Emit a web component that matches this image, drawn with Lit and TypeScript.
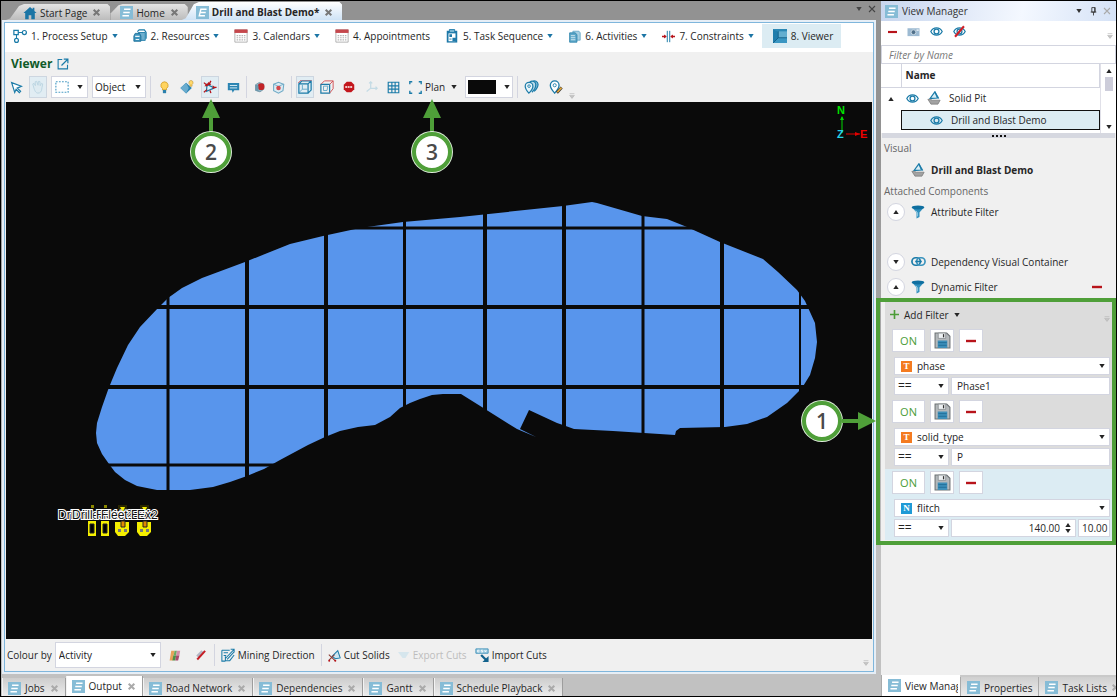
import { LitElement, html, svg, css } from "lit";
import { customElement } from "lit/decorators.js";
import { classMap } from "lit/directives/class-map.js";

const icon = (body: unknown, w = 14, h = 14, box = "0 0 16 16") =>
  html`<svg class="icon" width=${w} height=${h} viewBox=${box} fill="none" aria-hidden="true">${body}</svg>`;

const B = "#1b7ba8";
const R = "#b8141b";

const docBody = svg`<rect width="16" height="16" fill="#86bcd6"/><path d="M5 4h8M4 8h8M3 12h8" stroke="#fff" stroke-width="1.6"/>`;
const doc = () => icon(docBody, 13, 13);
const docE = () => icon(svg`<rect width="16" height="16" fill="#86bcd6"/><path d="M13 4H6L4 12h7M5 8h7" stroke="#fff" stroke-width="1.7"/>`, 13, 13);
const cross = () => icon(svg`<path d="M3 3l10 10M13 3L3 13" stroke="currentColor" stroke-width="3.6"/>`, 9, 9);
const caret = () => icon(svg`<path d="M0 0h8L4 6z" fill="currentColor"/>`, 6, 4, "0 0 8 6");
const caretUp = () => icon(svg`<path d="M0 6h8L4 0z" fill="currentColor"/>`, 6, 4, "0 0 8 6");
const overflow = () => icon(svg`<path d="M1 1h8M1 4h8L5 9z" stroke="#b5b5b5" fill="#c4c4c4"/>`, 6, 6, "0 0 10 10");
const eye = (w = 13) => icon(svg`<path d="M1 8c3-6 11-6 14 0c-3 6-11 6-14 0z" stroke="${B}" stroke-width="1.5"/><circle cx="8" cy="8" r="3" stroke="${B}" stroke-width="1.6"/>`, w, w);
const minus = (w = 10) => icon(svg`<path d="M0 2h10" stroke="${R}" stroke-width="2.4"/>`, w, 4, "0 0 10 4");
const boat = () => icon(svg`<path d="M9 1L3.500 8.500l8.500-.5z" fill="#d9eef6" stroke="${B}" stroke-width="1.400"/><path d="M9 1l4.500 7.500" stroke="${B}" stroke-width="1.300"/><path d="M1 9.500h3l2 1h9l-2.500 4.500h-8z" fill="#a2a2a2" stroke="#777" stroke-width=".8"/>`, 14, 14);
const funnel = () => icon(svg`<path d="M1 2.500L6.300 8.500v7l3.400-1.800V8.500L15 2.500z" fill="#2f8fbd"/><ellipse cx="8" cy="2.800" rx="7.200" ry="2.200" fill="#0f6fa0"/><path d="M5.500 6.500l2 2.500v4" stroke="#9cd0e6"/>`, 14, 14);
const save = () => icon(svg`<path d="M1 1h11l3 3v11H1z" fill="#b4b8bb" stroke="#6d7275"/><path d="M4 1h7v5H4z" fill="#eef1f3" stroke="#80868a" stroke-width=".7"/><path d="M9 2v3" stroke="#333" stroke-width="1.2"/><path d="M3.500 8h9v7h-9z" fill="#3c8fba"/><path d="M4 10h8M4 12.500h8" stroke="#1f6a94" stroke-width=".8"/>`, 17, 17);
const calendar = () => icon(svg`<path d="M1 1h14v14H1z" fill="#fff" stroke="#a9a9a9"/><path d="M.5.5h15v4H.5z" fill="#c5474c"/><path d="M3 7.500h10M3 10h10M3 12.500h10" stroke="#b5b5b5" stroke-width="1.400" stroke-dasharray="1.800 1"/>`, 14, 14);

const ic = {
  home: () => icon(svg`<path d="M8 1L.5 8h2v7H6.500v-4.500h3V15h4V8h2L13 5.600V2h-2v1.700z" fill="#1b75a5"/>`, 14, 14),
  process: () => icon(svg`<path d="M1 1.500h5v5H1z" stroke="${B}" stroke-width="1.400"/><circle cx="13" cy="4" r="2.300" stroke="${B}" stroke-width="1.400"/><circle cx="4" cy="13" r="2.200" stroke="${B}" stroke-width="1.400"/><path d="M6 4h5M4 6.500v4.300" stroke="${B}" stroke-width="1.200"/>`, 14, 14),
  resources: () => icon(svg`<path d="M6 4h8v9H6z" fill="#6fb0cf" stroke="${B}"/><path d="M5 3l2-2h6l2 3v7" stroke="${B}" stroke-width="1.300"/><path d="M1 8l1.500-3h5L9 8v6H1z" fill="#3d94bd" stroke="#1c6f99"/><path d="M2.500 8.500h5M3 12h4" stroke="#e8f4f9" stroke-width="1.300"/>`, 14, 14),
  sequence: () => icon(svg`<path d="M2 2h12v13.500H2z" fill="#1d78a8"/><path d="M4 5h8v9H4z" fill="#fff"/><path d="M5 .5h6V4H5z" fill="#78b5d2" stroke="#1d78a8"/><path d="M5 6h3v3H5zM8.500 10h4v4h-4z" fill="#1d78a8"/><path d="M5 11.500h2.500" stroke="#1d78a8"/>`, 14, 14),
  activities: () => icon(svg`<path d="M6 1.500h7.500l1.500 2v9H6z" fill="#a9d0e2" stroke="#5fa5c5"/><path d="M2 3.500h7L11 6v9H2z" fill="#5ea7c8" stroke="#2b82ab"/><path d="M3.500 7h5M3.500 9.500h5.500M3.500 12h5.500" stroke="#e8f5fa"/>`, 13, 13),
  constraints: () => icon(svg`<path d="M6.500 1v14M9.500 1v14" stroke="${B}" stroke-width="1.200"/><path d="M0 8h5M16 8h-5" stroke="${R}" stroke-width="1.600"/><path d="M2.500 5.500L5.800 8l-3.300 2.500zM13.500 5.500L10.200 8l3.300 2.500z" fill="${R}"/>`, 13, 13),
  viewer: () => icon(svg`<path d="M0 0h16v16H0z" fill="#3a96c2"/><path d="M0 0l6 3v7l-6 6z" fill="#1f7dac"/><path d="M6 2.500h10V10H6z" fill="#63aed0"/><path d="M0 0h16v2.500H5z" fill="#2c88b5"/><path d="M0 16l6-6h10M6 2.500V10" stroke="#0c587f" stroke-width=".9"/>`, 14, 14),
  external: () => icon(svg`<path d="M7 2H1.500v12.500H14V9" stroke="${B}" stroke-width="1.500"/><path d="M6 10l8-8M9 1.500h5.500V7" stroke="${B}" stroke-width="1.600"/>`, 12, 12),
  cursor: () => icon(svg`<path d="M2 2l12 4.500-5 2.200 4 4-1.500 1.500-4-4L5.800 14z" fill="#fff" stroke="${B}" stroke-width="1.500"/>`, 13, 13),
  hand: () => icon(svg`<path d="M3 8L2 4.500l1.500-.7L5 6.500 4.800 2 6.500 1.500 8 6 8.500 1.500l1.700.2.300 4.800 1.500-2.700 1.400.7L12.500 9c0 4-2 6-4.500 6S4 12 3 8z" fill="#deebf1" stroke="#b8d4e0"/>`, 14, 14),
  marquee: () => icon(svg`<path d="M1 2h14v12H1z" stroke="#4a9cc4" stroke-width="1.300" stroke-dasharray="2 1.500"/>`, 14, 14),
  bulb: () => icon(svg`<path d="M8 1a4.500 4.500 0 0 0-2.500 8.200V11h5V9.200A4.500 4.500 0 0 0 8 1z" fill="#ffd460" stroke="#d39a1c"/><path d="M6 11h4v4H6z" fill="#2b80ac"/>`, 13, 13),
  diamond: () => icon(svg`<path d="M7 3l6.500 6L7 15.500.5 9z" fill="#2b84b2"/><path d="M7 3l3 6-3 6.500L.5 9z" fill="#6aacce"/><path d="M12.500.5a2.500 2.500 0 0 1 1.300 4.600v2h-2.500v-2A2.500 2.500 0 0 1 12.500.5z" fill="#ffd86b" stroke="#b88a25" stroke-width=".6"/>`, 14, 14),
  sun: () => icon(svg`<path d="M4.500 5L13 9l-9 4z" fill="#dff0f7" stroke="${B}" stroke-width="1.400"/><path d="M1 3l3.500 3M9 1L7 5M15.500 8.500H12M1 14l3.500-3M9 15l-1-3" stroke="${R}" stroke-width="1.500"/><path d="M5.500 3v4H1.500zM6 2l3.500 3.500-4 .5zM11 6l3 2.500-3 2z" fill="${R}"/>`, 14, 14),
  comment: () => icon(svg`<path d="M1 2.500h14v9H9L7 14.500 6 11.500H1z" fill="#2b84b2"/><path d="M3.500 5.500h9M3.500 8.500h9" stroke="#d7ecf5" stroke-width="1.200"/>`, 13, 13),
  cubeRed: () => icon(svg`<path d="M2 5l5-3 6 2v7l-5 3.500-6-2z" fill="#8fb4c6" stroke="#6d8f9f"/><circle cx="9.500" cy="7.500" r="4.500" fill="#c22327"/><path d="M2 5l4 1v8l-4-1.500z" fill="#6c99ae"/>`, 12, 12),
  cubePale: () => icon(svg`<path d="M2 4l6-2.500L14.500 4l-1 8-5.500 3-6-3z" fill="#dcecf3" stroke="#6ea9c5" stroke-width="1.300"/><path d="M2 4l6 2.500L14 4" stroke="#6ea9c5"/><circle cx="8" cy="8.500" r="2.800" fill="#d3474b"/>`, 13, 13),
  box: () => icon(svg`<path d="M1 4.500h10.500V15H1zM1 4.500L4.500 1H15v10.500L11.500 15M11.500 4.500L15 1" stroke="${B}" stroke-width="1.400"/><path d="M0 3.500L3.500 0H16" stroke="#d8666a" stroke-width="1"/><path d="M5 5.500v5h6M5 10.500L1.500 14" stroke="#5aa4c6"/>`, 14, 14),
  boxSkew: () => icon(svg`<path d="M1 5h10v10H1z" stroke="${B}" stroke-width="1.400"/><path d="M1 5l4-4h10v9l-4 5M11 5l4-4" stroke="#d2555a" stroke-width="1.100"/><path d="M4 7h5l-1 5H4z" stroke="#5aa4c6"/>`, 14, 14),
  stop: () => icon(svg`<path d="M5 1h6l4 4v6l-4 4H5l-4-4V5z" fill="#c3161c"/><path d="M3 8h10" stroke="#fff" stroke-width="2.200" stroke-dasharray="2.500 .8"/>`, 12, 12),
  axes: () => icon(svg`<path d="M7 1v8l-5 4M7 9h8M5 3l2-2 2 2M13 7l2 2-2 2" stroke="#c4dbe5" stroke-width="1.500"/>`, 13, 13),
  grid: () => icon(svg`<path d="M1.500 1.500h13v13h-13zM6 1.500v13M10 1.500v13M1.500 6h13M1.500 10h13" stroke="${B}" stroke-width="1.400"/>`, 13, 13),
  frame: () => icon(svg`<path d="M1 4V1h3M12 1h3v3M15 12v3h-3M4 15H1v-3" stroke="${B}" stroke-width="1.700"/>`, 13, 13),
  pins: () => icon(svg`<path d="M11 13c3-3 4.500-5 4.500-8A4 4 0 0 0 9 2" fill="#7db9d6" stroke="${B}" stroke-width="1.300"/><path d="M8.500 14c3-3 4.300-5 4.300-8A4 4 0 0 0 6 2.500" fill="#b9dbea" stroke="${B}" stroke-width="1.300"/><path d="M5 15C2 11.500.8 9.500.8 7a4.400 4.400 0 0 1 8.800 0C9.600 9.500 8 12 5 15z" fill="#e9f5fa" stroke="${B}" stroke-width="1.400"/><circle cx="5.200" cy="7" r="1.500" stroke="${B}"/>`, 15, 14),
  pinEdit: () => icon(svg`<path d="M6.500 15C3 11 1.500 8.800 1.500 6a5 5 0 0 1 10 0c0 2.800-1.500 5-5 9z" fill="#fff" stroke="${B}" stroke-width="1.500"/><circle cx="6.500" cy="6" r="1.800" stroke="${B}"/><path d="M9 14.500l5.500-6" stroke="#3a3a3a" stroke-width="3.200"/><path d="M9.500 14l4.800-5.300" stroke="#e3a83a" stroke-width="1.800"/>`, 14, 14),
  palette: () => icon(svg`<path d="M4 2h4L6 14H2z" fill="#e8a35a"/><path d="M8 2h3l-1 6H7z" fill="#6cab63"/><path d="M11 2h4l-1 6h-4z" fill="#d58ea9"/><path d="M6.500 8h3.500l-1 6H5.500z" fill="#4d8f46"/><path d="M10 8h4l-1.500 6H9z" fill="#a9496d"/>`, 13, 13),
  brush: () => icon(svg`<path d="M3 10L10 3" stroke="#b3b6c4" stroke-width="4"/><path d="M3 14L13.500 2.500" stroke="#c51d24" stroke-width="2.600"/>`, 12, 12),
  direction: () => icon(svg`<path d="M1 2.500h9M1 2.500V15h4M3 5.500h5M3 8.500h3M15 1.500L5 12M15 4.500L7 13M15 8l-5 6.500H5v-5M11 1.500h4v3.500" stroke="${B}" stroke-width="1.200"/>`, 14, 14),
  cut: () => icon(svg`<path d="M5 9l7-7 3 9-6 1z" fill="#cce6f1" stroke="${B}" stroke-width="1.300"/><path d="M1 7l8 7.500M8 7l-7 7" stroke="#8c3b34" stroke-width="1.300"/><circle cx="9" cy="14.500" r="1.200" fill="${R}"/><circle cx="1.500" cy="14.500" r="1.200" fill="${R}"/>`, 13, 13),
  exportCuts: () => icon(svg`<path d="M0 4h15l-5 8H6z" fill="#d6e6ed"/>`, 12, 12),
  importCuts: () => icon(svg`<path d="M1 1h14v5H1z" fill="#a5cfe2" stroke="#3b8fb8"/><path d="M5 2.500H3v2h2M9 2.500H7l2 2H7M11 2.500l1 2 1-2" stroke="#fff" stroke-width=".9"/><path d="M7 8l6 6" stroke="#12628d" stroke-width="2.600"/><path d="M15.500 9v7h-7z" fill="#12628d"/>`, 14, 14),
  camera: () => icon(svg`<path d="M0 3h16v10.500H0z" fill="#9dbad2"/><circle cx="8" cy="8.300" r="3.200" fill="#50708a" stroke="#dfe9f0"/><path d="M12 4.500h3v2h-3z" fill="#e8f0f6"/>`, 13, 12),
  eyeOff: () => icon(svg`<path d="M1 8c3-6 11-6 14 0c-3 6-11 6-14 0z" stroke="${B}" stroke-width="1.500"/><circle cx="8" cy="8" r="3" stroke="${B}" stroke-width="1.600"/><path d="M2.500 14.500L13.500 1.500" stroke="#cf1f27" stroke-width="2.600"/>`, 13, 13),
  link: () => icon(svg`<rect x="1" y="4" width="9" height="8" rx="4" stroke="${B}" stroke-width="1.800"/><rect x="6" y="4" width="9" height="8" rx="4" stroke="#3a93bd" stroke-width="1.800"/><path d="M4.500 8h7" stroke="${B}" stroke-width="1.700"/>`, 15, 15),
  plus: () => icon(svg`<path d="M5 0v10M0 5h10" stroke="#4b9c37" stroke-width="1.800"/>`, 9, 9, "0 0 10 10"),
  pin: () => icon(svg`<path d="M5 1h6v8H5zM3 9h10M8 9v6M10 1v8" stroke="#333" stroke-width="1.500"/>`, 9, 9),
  x: () => icon(svg`<path d="M2 2l12 12M14 2L2 14" stroke="currentColor" stroke-width="2.200"/>`, 8, 8),
};

const OUTLINE =
  "M158 308L140 327L128 345L117 368L112 380L108 390L102 407L97 423L96 433L97 443L102 454L109 464L115 472L125 480L137 486L157 490L190 490L213 487L230 482L247 476L264 469L280 460L308 445L325 437L340 431L358 427L375 425L390 417L400 408L410 403L420 399L432 395L443 394L461 394L485 409L517 429L536 437L520 429L529 410L557 423L563 425L574 429L613 431L675 435L676 431L680 428L725 427L747 424L767 417L787 403L802 388L810 375L815 358L817 342L815 323L810 312L805 301L797 290L778 272L763 259L720 242L687 227L667 219L642 216L597 203L592 202L563 206L460 217L403 222L360 228L323 236L290 244L245 262L202 278L182 288L168 298Z";

const drill = (x: number) => svg`<g transform="translate(${x} 505)"><path d="M-4 16h8v15h-8z" fill="#f5ef00"/><path d="M-2 19h4v9h-4z" stroke="#222"/><path d="M-1 0h3v3h-3z" fill="#8a8600"/></g>`;
const digger = (x: number) => svg`<g transform="translate(${x} 505)"><path d="M-4 0h9v4l-3 3h-3l-3-3z" fill="#2a2700"/><path d="M-2 2h5l-2 5z" fill="#f5ef00"/><path d="M-7 17H7v10l-4 4h-7l-3-4z" fill="#f5ef00"/><path d="M-1 16h4v6h-4z" fill="#e08a00" stroke="#222"/><path d="M-4 24h3v3h-3zM2 24h3v3H2z" fill="#777"/></g>`;

const base = css`
  * { box-sizing: border-box; }
  button, select, input { font: inherit; color: inherit; margin: 0; padding: 0; border: 0; border-radius: 0; background: none; outline: 0; }
  select { appearance: none; }
  button { display: inline-flex; align-items: center; justify-content: center; white-space: nowrap; }
  .icon { display: block; flex: none; }
  .drop { display: inline-grid; grid-template-columns: 1fr auto; align-items: center; background: #fff; border: 1px solid #d3d5e0; color: #222; }
  .drop > select { grid-area: 1 / 1 / 2 / 3; width: 100%; height: 100%; padding-left: 4px; }
  .drop > .icon { grid-area: 1 / 2; margin-right: 4px; pointer-events: none; }
`;

@customElement("view-manager")
export class ViewManager extends LitElement {
  static styles = [base, css`
    :host { display: flex; flex-direction: column; flex: none; width: 235px; background: #f0f0f0; }
    .title { display: flex; align-items: center; height: 20px; padding: 0 4px; gap: 4px; background: linear-gradient(100deg, #c8d6ee, #f4f8ff 60%, #d5e2f6); color: #333; }
    .title .name { flex: 1; }
    .title button { width: 10px; }
    .tools { display: flex; align-items: center; gap: 10px; height: 24px; padding: 0 3px 3px 7px; background: #fff; }
    .tools .end { margin-left: auto; align-self: flex-end; padding-bottom: 3px; }
    .search { flex: none; height: 19px; width: 100%; padding: 0 7px; border: 1px solid #d3d5e0; background: #fff; font-style: italic; }
    .search::placeholder { color: #777; opacity: 1; }
    .list { display: flex; background: #fff; height: 69px; }
    table { flex: 1; border-collapse: collapse; table-layout: fixed; margin-bottom: 2px; }
    th { height: 23px; padding: 0 4px; border-bottom: 1px solid #d3d5e0; border-right: 1px solid #d3d5e0; text-align: left; font-weight: 700; }
    th:first-child { width: 20px; }
    td { height: 21px; padding: 0; }
    .node { display: flex; align-items: center; gap: 8px; padding-left: 5px; }
    .selected { border: 1px solid #111; background: #dcecf3; padding-left: 28px; height: 20px; }
    .toggle { width: 20px; height: 14px; }
    .scroll { display: flex; flex-direction: column; align-items: center; width: 16px; padding: 5px 0 4px; border-left: 1px solid #e0e0e8; }
    .thumb { width: 8px; height: 14px; margin: 4px 0 auto; background: #cdcdda; }
    .splitter { display: flex; align-items: center; justify-content: center; gap: 2px; height: 5px; margin: 0 1px; background: #d6d8e0; }
    .splitter i { width: 2px; height: 2px; background: #111; }
    .details { flex: 1; padding: 3px 2px 0 3px; }
    .caption { height: 14px; line-height: 14px; color: #666; }
    .heading { display: flex; align-items: center; gap: 6px; height: 29px; padding-left: 27px; font-weight: 700; }
    .component { display: flex; align-items: center; gap: 5px; height: 25px; padding: 0 12px 0 3px; }
    .component.tall { height: 50px; padding-bottom: 25px; }
    .component .label { flex: 1; }
    .glyph { display: flex; justify-content: center; width: 16px; }
    .round { width: 18px; height: 18px; border: 1px solid #d3d5e0; border-radius: 50%; background: #fff; }
    .attached { padding-top: 1px; }
    .filters { position: relative; margin: 3px 0 0 1px; background: #dcdcdc; }
    .filters::after { content: ""; position: absolute; inset: -4px -2px -5px -9px; border: 4px solid #4f9f39; pointer-events: none; }
    .add { display: flex; align-items: center; justify-content: space-between; height: 25px; padding: 0 4px 0 5px; }
    .add button { gap: 5px; }
    .add .more { margin-top: 8px; }
    .filter { display: flex; flex-direction: column; padding: 2px 3px 3px 7px; }
    .filter.current { background: #dcecf3; }
    .actions { display: flex; gap: 5px; margin-bottom: 5px; }
    .actions button { width: 24px; height: 23px; background: #fff; border: 1px solid #d3d5e0; }
    .actions .on { width: 33px; color: #4b9c37; font-size: 11px; }
    .field { display: grid; grid-template-columns: auto 1fr; height: 18px; margin: 0 1px 2px 2px; background: #fff; border: 1px solid #d3d5e0; align-items: center; }
    .tag { width: 11px; height: 11px; margin: 0 0 0 6px; background: #f47b20; color: #fff; font: 700 9px/11px "Liberation Serif", serif; text-align: center; }
    .tag.n { background: #1f9ad6; }
    .field .drop { border: 0; height: 16px; }
    .field .drop > select { padding-left: 5px; }
    .values { display: flex; gap: 2px; height: 18px; margin: 0 1px 0 2px; }
    .values .drop { width: 55px; flex: none; }
    .values .drop > select { padding-left: 3px; font-size: 12px; line-height: 14px; }
    .value { display: flex; flex: 1; min-width: 0; background: #fff; border: 1px solid #d3d5e0; }
    .value input { flex: 1; width: 100%; min-width: 0; padding: 0 5px; }
    .value.number input { text-align: right; }
    .value.step { flex: none; width: 32px; }
    .value.step input { padding: 0 0 0 3px; }
    .spin { display: flex; flex-direction: column; justify-content: center; gap: 2px; width: 10px; }
    .spin button { width: 6px; height: 4px; }
    .tabs { display: flex; align-items: flex-end; height: 21px; background: #c9c9c9; overflow: hidden; }
    .tab { justify-content: flex-start; gap: 4px; height: 19px; padding: 2px 6px 0 6px; background: linear-gradient(#cfcfcf, #ececec); border-left: 1px solid #aaa; flex: none; }
    .tab.active { height: 21px; width: 79px; padding: 0 2px 0 6px; background: #fff; overflow: hidden; }
    .tab.active span { overflow: hidden; }
    .closer { color: #aaa; }
  `];

  private filters = [
    { field: "phase", value: "Phase1", step: "" },
    { field: "solid_type", value: "P", step: "" },
    { field: "flitch", value: "140.00", step: "10.00" },
  ];

  private component(label: string, glyph: unknown, up: boolean, tall = false, removable = false) {
    return html`<div class=${classMap({ component: true, tall })}>
      <button class="round" aria-label="Toggle ${label}">${up ? caretUp() : caret()}</button>
      <span class="glyph">${glyph}</span><span class="label">${label}</span>
      ${removable ? html`<button aria-label="Remove ${label}">${minus()}</button>` : ""}
    </div>`;
  }

  private filter(f: { field: string; value: string; step: string }) {
    const num = f.step !== "";
    return html`<div class=${classMap({ filter: true, current: num })}>
      <div class="actions"><button class="on">ON</button><button aria-label="Save">${save()}</button><button aria-label="Remove">${minus()}</button></div>
      <div class="field"><span class=${classMap({ tag: true, n: num })}>${num ? "N" : "T"}</span>
        <span class="drop"><select aria-label="Field"><option>${f.field}</option></select>${caret()}</span></div>
      <div class="values">
        <span class="drop"><select aria-label="Operator"><option>==</option></select>${caret()}</span>
        <span class=${classMap({ value: true, number: num })}><input aria-label="Value" .value=${f.value} />
          ${num ? html`<span class="spin"><button aria-label="Increase">${caretUp()}</button><button aria-label="Decrease">${caret()}</button></span>` : ""}</span>
        ${num ? html`<span class="value step"><input aria-label="Step" .value=${f.step} /></span>` : ""}
      </div>
    </div>`;
  }

  render() {
    return html`
      <div class="title">${doc()}<span class="name">View Manager</span>
        <button aria-label="Options">${caret()}</button><button aria-label="Pin">${ic.pin()}</button><button class="closer" aria-label="Close">${ic.x()}</button></div>
      <div class="tools"><button aria-label="Remove">${minus(9)}</button><button aria-label="Snapshot">${ic.camera()}</button>
        <button aria-label="Show">${eye()}</button><button aria-label="Hide">${ic.eyeOff()}</button><span class="end">${overflow()}</span></div>
      <input class="search" placeholder="Filter by Name" aria-label="Filter by Name" />
      <div class="list">
        <table>
          <thead><tr><th></th><th>Name</th></tr></thead>
          <tbody>
            <tr><td><button class="toggle" aria-label="Collapse">${caretUp()}</button></td><td><div class="node">${eye()}${boat()}<span>Solid Pit</span></div></td></tr>
            <tr><td></td><td><div class="node selected">${eye()}<span>Drill and Blast Demo</span></div></td></tr>
          </tbody>
        </table>
        <div class="scroll">${caretUp()}<span class="thumb"></span>${caret()}</div>
      </div>
      <div class="splitter"><i></i><i></i><i></i><i></i></div>
      <div class="details">
        <div class="caption">Visual</div>
        <div class="heading">${boat()}<span>Drill and Blast Demo</span></div>
        <div class="caption">Attached Components</div>
        <div class="attached">
          ${this.component("Attribute Filter", funnel(), true, true)}
          ${this.component("Dependency Visual Container", ic.link(), false)}
          ${this.component("Dynamic Filter", funnel(), true, false, true)}
        </div>
        <div class="filters">
          <div class="add"><button>${ic.plus()}<span>Add Filter</span>${caret()}</button><span class="more">${overflow()}</span></div>
          ${this.filters.map((f) => this.filter(f))}
        </div>
      </div>
      <div class="tabs">
        <button class="tab active">${doc()}<span>View Manager</span></button>
        <button class="tab">${doc()}<span>Properties</span></button>
        <button class="tab">${doc()}<span>Task Lists</span><span class="closer">${cross()}</span></button>
      </div>`;
  }
}

@customElement("app-root")
export class AppRoot extends LitElement {
  static styles = [base, css`
    :host { position: relative; display: flex; height: 100vh; box-sizing: border-box; border: 1px solid #000; overflow: hidden;
      font: 10px/14px "Open Sans", "Noto Sans", sans-serif; color: #262626; background: linear-gradient(#929292, #929292 20%, #c1c1c1 80%); }
    .workspace { display: flex; flex-direction: column; flex: 1; min-width: 0; margin-right: 5px; }
    .doctabs { display: flex; align-items: flex-end; height: 19px; padding-left: 5px; }
    .doctab { justify-content: flex-start; gap: 3px; height: 16px; padding: 1px 9px 0 17px;
      background: linear-gradient(#e4e4e4, #bcbcbc); clip-path: polygon(0 100%, 4px 90%, 13px 12%, 18px 0, calc(100% - 3px) 0, 100% 3px, 100% 100%); }
    .doctab + .doctab { padding-left: 10px; clip-path: polygon(0 100%, 0 60%, 8px 8%, 12px 0, calc(100% - 3px) 0, 100% 3px, 100% 100%); }
    .doctab.active { height: 18px; padding: 2px 9px 0 16px; margin-left: -6px; font-weight: 700; background: linear-gradient(#fff, #cfe3f6);
      clip-path: polygon(0 100%, 4px 90%, 12px 12%, 17px 0, calc(100% - 3px) 0, 100% 3px, 100% 100%); }
    .doctab.active.active { padding-left: 14px; }
    .doctab .close { color: #777; margin-left: 2px; }
    .windowctl { display: flex; align-items: center; gap: 6px; margin-left: auto; color: #444; height: 22px; }
    .frame { flex: 1; min-height: 0; display: flex; margin-left: 1px; border: 2px solid #e6eef6; }
    .panel { flex: 1; min-width: 0; display: flex; flex-direction: column; border: 1px solid #7fb6dc; background: #f0f0f0; }
    .menu { display: flex; align-items: center; height: 29px; padding-bottom: 3px; background: #fff; }
    .menu button { gap: 4px; height: 24px; padding: 0 8px 0 7px; }
    .menu button:first-child { padding-left: 8px; }
    .menu button > .icon:last-child { color: #1b75a5; }
    .menu .current { background: #dcecf3; padding: 0 8px 0 11px; }
    .head { display: flex; align-items: center; gap: 5px; height: 23px; padding-left: 6px; }
    h1 { margin: 0; font-size: 12px; line-height: 16px; font-weight: 700; color: #0f5a28; }
    .bar { display: flex; align-items: center; gap: 4px; height: 27px; padding: 0 2px 3px; }
    .group { display: flex; gap: 5px; }
    .group.views { gap: 4px; }
    .group.tight { gap: 0; }
    .tool { width: 18px; height: 22px; border: 1px solid transparent; }
    .tool.on { background: #e1edf3; border-color: #cdd6e0; }
    .sep { width: 1px; height: 22px; background: #d3d5e0; flex: none; }
    .bar .drop { height: 22px; }
    .mode { width: 37px; }
    .mode > .lead { grid-area: 1 / 1; margin-left: 3px; pointer-events: none; }
    .object { width: 54px; }
    .object > select { padding-left: 2px; }
    .plan { gap: 3px; padding: 0 4px 0 3px; }
    .plan .icon:last-child { margin-left: 3px; }
    .swatch { gap: 8px; width: 48px; height: 22px; background: #fff; border: 1px solid #d3d5e0; }
    .black { width: 28px; height: 14px; background: #0a0a0a; }
    .pins { display: flex; gap: 7px; }
    .low { align-self: flex-end; }
    .scene { flex: 1; min-height: 0; display: flex; margin: 0 1px; background: #0a0a0a; position: relative; }
    .scene svg { flex: 1; min-width: 0; display: block; }
    .scene .compass { position: absolute; top: 0; right: 0; }
    .axis { font: 700 11px "Liberation Sans", sans-serif; }
    .names { font: 12px "Liberation Sans", sans-serif; fill: #111; stroke: #fff; stroke-width: 2px; paint-order: stroke; }
    .foot { display: flex; align-items: center; gap: 6px; height: 32px; padding: 0 4px 0 2px; }
    .foot .drop { width: 106px; height: 26px; }
    .foot .drop > select { padding-left: 3px; }
    .foot button { gap: 3px; }
    .foot label { margin-right: -3px; }
    .foot .group { gap: 14px; padding: 0 1px; }
    .foot .cuts { gap: 8px; padding: 0; }
    .foot :disabled { color: #bdbdbd; }
    .foot .low { margin-left: auto; padding-bottom: 5px; }
    .pagetabs { display: flex; align-items: flex-end; height: 22px; padding-left: 1px; }
    .pagetab { justify-content: flex-start; gap: 4px; height: 18px; padding: 2px 6px 0 5px; background: linear-gradient(#cdcdcd, #ececec); border-right: 1px solid #9d9d9d; border-left: 1px solid #f3f3f3; }
    .pagetab.active { height: 20px; padding-top: 0; background: #fff; }
    .close { color: #aaa; margin-left: 1px; }
    .callout { position: absolute; pointer-events: none; display: flex; align-items: center; }
    .callout.up { flex-direction: column; top: 98px; }
    .callout .disc { display: flex; align-items: center; justify-content: center; width: 40px; height: 40px; border: 4px solid #4f9f39; border-radius: 50%;
      background: #fff; color: #4a4a4a; font: 600 21px/24px "Open Sans", sans-serif; box-shadow: 0 0 0 1px #dfeedb; }
    .callout.two { left: 190px; }
    .callout.three { left: 411px; }
    .callout.one { top: 400px; right: 240px; }
  `];

  private menu = [
    { label: "1. Process Setup", glyph: ic.process, drop: true },
    { label: "2. Resources", glyph: ic.resources, drop: true },
    { label: "3. Calendars", glyph: calendar, drop: true },
    { label: "4. Appointments", glyph: calendar, drop: false },
    { label: "5. Task Sequence", glyph: ic.sequence, drop: true },
    { label: "6. Activities", glyph: ic.activities, drop: true },
    { label: "7. Constraints", glyph: ic.constraints, drop: true },
    { label: "8. Viewer", glyph: ic.viewer, drop: false, current: true },
  ];

  private tool(label: string, glyph: unknown, on = false) {
    return html`<button class=${classMap({ tool: true, on })} aria-label=${label}>${glyph}</button>`;
  }

  private upArrow() {
    return html`<svg width="18" height="33" viewBox="0 0 18 33" aria-hidden="true"><path d="M9 0l9 19h-7v14H7V19H0z" fill="#4f9f39"/></svg>`;
  }

  private scene() {
    const cols = [[168, 3], [247, 4], [326, 4], [404.5, 3], [485, 4], [564, 4], [643, 3], [722, 4], [800, 2]];
    const rows = [[228, 3], [307, 4], [387, 4], [465, 3]];
    return html`<div class="scene">
      <svg aria-label="Plan of drill and blast solids"><g transform="translate(-6 -102)">
        <path d=${OUTLINE} fill="#5895ec"/>
        ${cols.map(([x, w]) => svg`<path d="M${x} 195V495" stroke="#0a0a0a" stroke-width=${w}/>`)}
        ${rows.map(([y, w]) => svg`<path d="M90 ${y}H825" stroke="#0a0a0a" stroke-width=${w}/>`)}
        ${drill(92)}${drill(105)}${digger(122)}${digger(144)}
        <g class="names"><text x="58" y="519">Drill Fleet 1</text><text x="72" y="519">Drill Fleet 2</text><text x="101" y="519">Fleet Ex1</text><text x="137" y="519">Ex2</text></g>
      </g></svg>
      <svg class="compass" width="36" height="42" viewBox="0 0 36 42"><path d="M6 15v16" stroke="#00d800"/><path d="M4 18l2-4 2 4z" fill="#00d800"/><path d="M10 32h14" stroke="#e00000"/><path d="M19 30l5 2-5 2z" fill="#e00000"/>
        <g class="axis"><text x="1" y="12" fill="#00e400">N</text><text x="1" y="36" fill="#27d5e8">Z</text><text x="24" y="36" fill="#f00000">E</text></g></svg>
    </div>`;
  }

  render() {
    return html`
      <div class="workspace">
        <div class="doctabs">
          <button class="doctab">${ic.home()}<span>Start Page</span><span class="close">${cross()}</span></button>
          <button class="doctab">${doc()}<span>Home</span><span class="close">${cross()}</span></button>
          <button class="doctab active">${docE()}<span>Drill and Blast Demo*</span><span class="close">${cross()}</span></button>
          <span class="windowctl">${caret()}${ic.x()}</span>
        </div>
        <div class="frame"><div class="panel">
          <nav class="menu">${this.menu.map((m) => html`<button class=${classMap({ current: !!m.current })}>${m.glyph()}<span>${m.label}</span>${m.drop ? caret() : ""}</button>`)}</nav>
          <div class="head"><h1>Viewer</h1><button aria-label="Open in window">${ic.external()}</button></div>
          <div class="bar">
            ${this.tool("Select", ic.cursor())}${this.tool("Pan", ic.hand(), true)}
            <span class="drop mode"><select aria-label="Selection mode"></select><span class="lead">${ic.marquee()}</span>${caret()}</span>
            <span class="drop object"><select aria-label="Selection target"><option>Object</option></select>${caret()}</span>
            <span class="sep"></span>
            <div class="group">${this.tool("Light", ic.bulb())}${this.tool("Highlight", ic.diamond())}${this.tool("Explode", ic.sun(), true)}${this.tool("Labels", ic.comment())}</div>
            <span class="sep"></span>
            <div class="group tight">${this.tool("Solid", ic.cubeRed())}${this.tool("Transparent", ic.cubePale())}</div>
            <span class="sep"></span>
            <div class="group views">${this.tool("Perspective", ic.box(), true)}${this.tool("Clip", ic.boxSkew())}${this.tool("Stop", ic.stop())}${this.tool("Axes", ic.axes())}${this.tool("Grid", ic.grid())}</div>
            <button class="plan">${ic.frame()}<span>Plan</span>${caret()}</button>
            <button class="swatch" aria-label="Background colour"><span class="black"></span>${caret()}</button>
            <span class="sep"></span>
            <div class="pins">${this.tool("Markers", ic.pins())}${this.tool("Edit marker", ic.pinEdit())}</div>
            <span class="low">${overflow()}</span>
          </div>
          ${this.scene()}
          <div class="foot">
            <label for="colour">Colour by</label>
            <span class="drop"><select id="colour"><option>Activity</option></select>${caret()}</span>
            <div class="group"><button aria-label="Palette">${ic.palette()}</button><button aria-label="Clear colours">${ic.brush()}</button></div>
            <span class="sep"></span>
            <button>${ic.direction()}<span>Mining Direction</span></button>
            <span class="sep"></span>
            <div class="group cuts"><button>${ic.cut()}<span>Cut Solids</span></button><button disabled>${ic.exportCuts()}<span>Export Cuts</span></button><button>${ic.importCuts()}<span>Import Cuts</span></button></div>
            <span class="low">${overflow()}</span>
          </div>
        </div></div>
        <div class="pagetabs">
          ${["Jobs", "Output", "Road Network", "Dependencies", "Gantt", "Schedule Playback"].map((t) => html`<button class=${classMap({ pagetab: true, active: t === "Output" })}>${doc()}<span>${t}</span><span class="close">${cross()}</span></button>`)}
        </div>
      </div>
      <view-manager></view-manager>
      <div class="callout up two">${this.upArrow()}<span class="disc">2</span></div>
      <div class="callout up three">${this.upArrow()}<span class="disc">3</span></div>
      <div class="callout one"><span class="disc">1</span><svg width="34" height="18" viewBox="0 0 34 18" aria-hidden="true"><path d="M34 9L16 0v7H0v4h16v7z" fill="#4f9f39"/></svg></div>`;
  }
}
